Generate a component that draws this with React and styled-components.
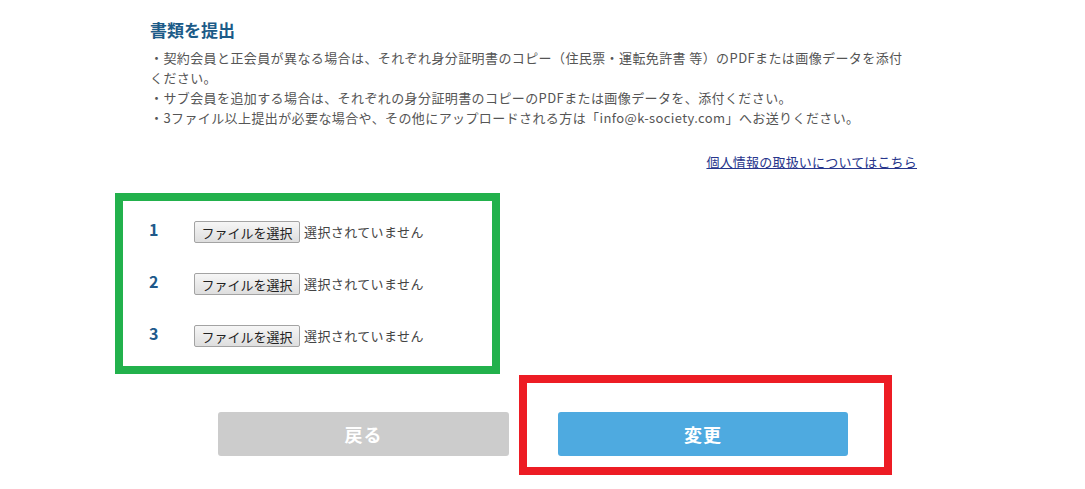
import React from 'react'
import styled, { createGlobalStyle } from 'styled-components';

const GlobalStyle = createGlobalStyle`
body{
    margin:0;
    background:#fff;
    font-family:"Noto Sans CJK JP","Noto Sans",sans-serif;
}
`;

const files = [1, 2, 3];

const App = () => {
    return (
        <>
            <GlobalStyle />
            <Page>
                <Intro>
                    <Title>書類を提出</Title>
                    <Notes>
                        ・契約会員と正会員が異なる場合は、それぞれ身分証明書のコピー（住民票・運転免許書 等）のPDFまたは画像データを添付<br />
                        ください。<br />
                        ・サブ会員を追加する場合は、それぞれの身分証明書のコピーのPDFまたは画像データを、添付ください。<br />
                        ・3ファイル以上提出が必要な場合や、その他にアップロードされる方は「info@k-society.com」へお送りください。
                    </Notes>
                    <PrivacyRow>
                        <PrivacyLink href="#">個人情報の取扱いについてはこちら</PrivacyLink>
                    </PrivacyRow>
                </Intro>
                <UploadBox>
                    {files.map((n) => (
                        <FileRow key={n}>
                            <FileNum>{n}</FileNum>
                            <PickButton type="button">ファイルを選択</PickButton>
                            <FileStatus>選択されていません</FileStatus>
                        </FileRow>
                    ))}
                </UploadBox>
                <Actions>
                    <ActionButton type="button" variant="back">戻る</ActionButton>
                    <Highlight>
                        <ActionButton type="button" variant="submit">変更</ActionButton>
                    </Highlight>
                </Actions>
            </Page>
        </>
    )
}

export default App

const Page = styled.main`
padding:18px 0 0 115px;
width:1085px;
height:489px;
box-sizing:border-box;
overflow:hidden;
`;
const Intro = styled.section`
padding-left:35px;
width:767px;
`;
const Title = styled.h2`
margin:0;
font-size:17px;
line-height:24px;
font-weight:700;
color:#1c5b88;
`;
const Notes = styled.p`
margin:6px 0 0;
font-size:13px;
line-height:20px;
letter-spacing:0.4px;
color:#555;
white-space:nowrap;
`;
const PrivacyRow = styled.div`
margin-top:24px;
text-align:right;
font-size:13px;
line-height:20px;
`;
const PrivacyLink = styled.a`
color:#27358c;
text-decoration:underline;
letter-spacing:0.2px;
`;
const UploadBox = styled.div`
margin-top:21px;
width:385px;
height:181px;
box-sizing:border-box;
border:8px solid #22b14c;
padding:20px 0 0 26px;
display:flex;
flex-direction:column;
gap:30px;
`;
const FileRow = styled.div`
display:flex;
align-items:flex-start;
height:22px;
`;
const FileNum = styled.span`
width:45px;
font-size:16px;
line-height:16px;
font-weight:700;
color:#20598a;
`;
const PickButton = styled.button`
height:22px;
width:106px;
padding:0;
border:1px solid #a3a3a3;
border-radius:2px;
background:linear-gradient(#f6f6f6,#dedede);
font-family:inherit;
font-size:13px;
color:#222;
`;
const FileStatus = styled.span`
margin-left:4px;
font-size:13px;
line-height:22px;
letter-spacing:0.4px;
color:#444;
`;
const Actions = styled.div`
margin:1px 0 0 103px;
display:flex;
align-items:flex-start;
gap:10px;
`;
const Highlight = styled.div`
width:373px;
height:100px;
box-sizing:border-box;
border:8px solid #ed1c24;
padding:29px 0 0 31px;
`;
const ActionButton = styled.button`
margin-top:${({variant}) => (variant === 'back' ? '37px' : '0')};
width:${({variant}) => (variant === 'back' ? '291px' : '290px')};
height:44px;
border:none;
border-radius:3px;
background:${({variant}) => (variant === 'back' ? '#cccccc' : '#4eaae0')};
color:#fff;
font-family:inherit;
font-size:18px;
font-weight:700;
letter-spacing:1px;
`;
